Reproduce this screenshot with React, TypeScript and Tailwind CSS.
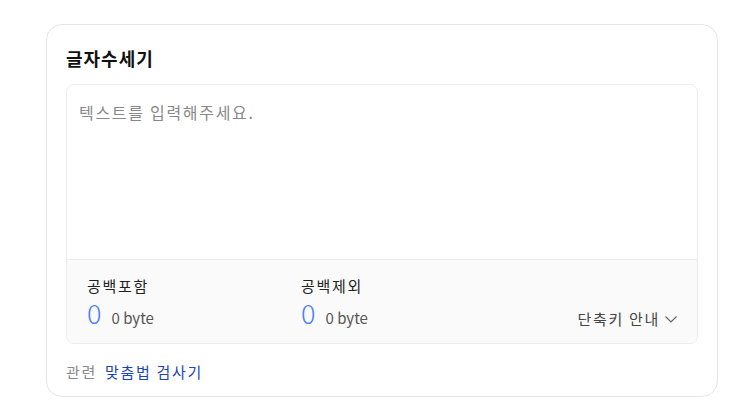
import React from "react";

export default function App() {
  return (
    <div
      className="w-[739px] h-[407px] bg-white pl-[46px] pt-[24px]"
      style={{ fontFamily: '"Noto Sans CJK KR", "Noto Sans", sans-serif' }}
    >
      <div className="w-[672px] h-[373px] rounded-[16px] border border-[#e6e6e6] bg-white px-[19px] pt-[20px] flex flex-col">
        <h2 className="text-[18px] leading-[27px] font-bold text-[#111] tracking-[1px]">글자수세기</h2>
        <div className="mt-[12px] w-[632px] rounded-[8px] border border-[#ececec] overflow-hidden">
          <textarea
            className="block w-full h-[174px] resize-none px-[12px] pt-[16px] text-[16px] leading-[22px] tracking-[1.7px] text-[#333] placeholder:text-[#888] outline-none bg-white"
            placeholder="텍스트를 입력해주세요."
          />
          <div className="h-[84px] border-t border-[#ececec] bg-[#fafafa] pl-[20px] pr-[19px] pt-[15px] flex">
            <div className="w-[214px] flex flex-col">
              <div className="text-[15px] leading-[22px] tracking-[1.7px] text-[#222]">공백포함</div>
              <div className="flex items-baseline gap-[10px]">
                <span className="text-[27px] leading-[32px] text-[#4d7ef6] font-light">0</span>
                <span className="text-[15px] text-[#555]">0 byte</span>
              </div>
            </div>
            <div className="w-[214px] flex flex-col">
              <div className="text-[15px] leading-[22px] tracking-[1.7px] text-[#222]">공백제외</div>
              <div className="flex items-baseline gap-[10px]">
                <span className="text-[27px] leading-[32px] text-[#4d7ef6] font-light">0</span>
                <span className="text-[15px] text-[#555]">0 byte</span>
              </div>
            </div>
            <div className="flex-1 flex justify-end items-end pb-[13px]">
              <button className="flex items-center gap-[4px] text-[15px] leading-[22px] tracking-[1.7px] text-[#444]">
                단축키 안내
                <svg width="14" height="14" viewBox="0 0 14 14" fill="none">
                  <path d="M1.5 4.5 L7 10 L12.5 4.5" stroke="#666" strokeWidth="1.2" />
                </svg>
              </button>
            </div>
          </div>
        </div>
        <div className="mt-[17px] flex items-center gap-[8px] text-[15px] leading-[22px] tracking-[1.7px]">
          <span className="text-[#888]">관련</span>
          <a className="text-[#1b45b3]">맞춤법 검사기</a>
        </div>
      </div>
    </div>
  );
}
